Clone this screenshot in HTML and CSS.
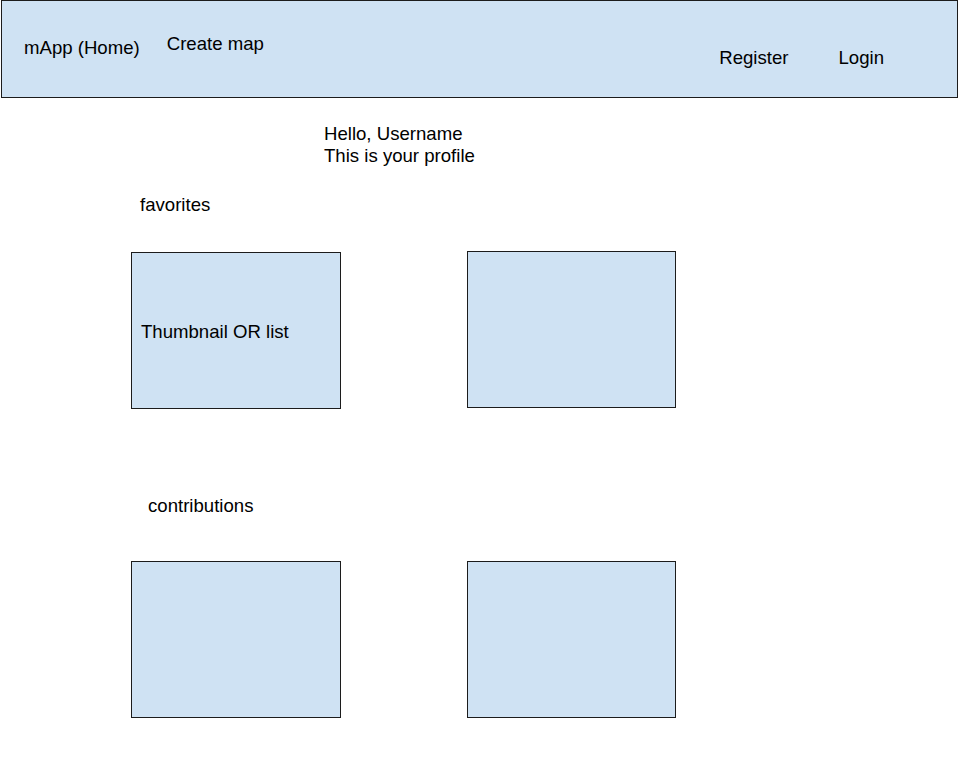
FILE: index.html
```html
<!DOCTYPE html>
<html lang="en">
<head>
<meta charset="utf-8">
<title>mApp - Profile</title>
<link rel="stylesheet" href="styles.css">
</head>
<body>
<header class="topbar">
  <a class="nav-link brand" href="#">mApp (Home)</a>
  <a class="nav-link create" href="#">Create map</a>
  <div class="spacer"></div>
  <a class="nav-link register" href="#">Register</a>
  <a class="nav-link login" href="#">Login</a>
</header>
<main class="profile">
  <div class="greeting">
    <div>Hello, Username</div>
    <div>This is your profile</div>
  </div>
  <h2 class="section-title favorites-title">favorites</h2>
  <div class="card-row favorites-row">
    <div class="card card-first"><span class="card-label">Thumbnail OR list</span></div>
    <div class="card card-second"></div>
  </div>
  <h2 class="section-title contributions-title">contributions</h2>
  <div class="card-row contributions-row">
    <div class="card card-first"></div>
    <div class="card card-second"></div>
  </div>
</main>
</body>
</html>
```
FILE: styles.css
```css
html, body {
  margin: 0;
  padding: 0;
  background: #ffffff;
}
body {
  font-family: "Liberation Sans", Arial, sans-serif;
  font-size: 18.6px;
  line-height: 22px;
  color: #000000;
}
.topbar {
  box-sizing: border-box;
  margin-left: 1px;
  width: 957px;
  height: 98px;
  background: #cfe2f3;
  border: 1px solid #1c1c1c;
  display: flex;
  align-items: flex-start;
}
.nav-link {
  color: #000000;
  text-decoration: none;
}
.brand {
  margin-left: 22px;
  margin-top: 36px;
}
.create {
  margin-left: 27px;
  margin-top: 32px;
}
.spacer {
  flex: 1;
}
.register {
  margin-top: 46px;
}
.login {
  margin-left: 50px;
  margin-right: 73px;
  margin-top: 46px;
}
.profile {
  display: flex;
  flex-direction: column;
}
.greeting {
  margin-left: 324px;
  margin-top: 25px;
}
.section-title {
  font-size: inherit;
  font-weight: normal;
  margin: 0;
}
.favorites-title {
  margin-left: 140px;
  margin-top: 27px;
}
.contributions-title {
  margin-left: 148px;
  margin-top: 86px;
}
.card-row {
  display: flex;
  align-items: flex-start;
  margin-left: 131px;
}
.favorites-row {
  margin-top: 36px;
}
.contributions-row {
  margin-top: 44px;
}
.card {
  box-sizing: border-box;
  width: 210px;
  height: 157px;
  background: #cfe2f3;
  border: 1px solid #1c1c1c;
  display: flex;
  align-items: center;
}
.card-second {
  width: 209px;
  margin-left: 126px;
}
.favorites-row .card-second {
  margin-top: -1px;
}
.card-label {
  padding-left: 9px;
  padding-top: 2px;
}
```
